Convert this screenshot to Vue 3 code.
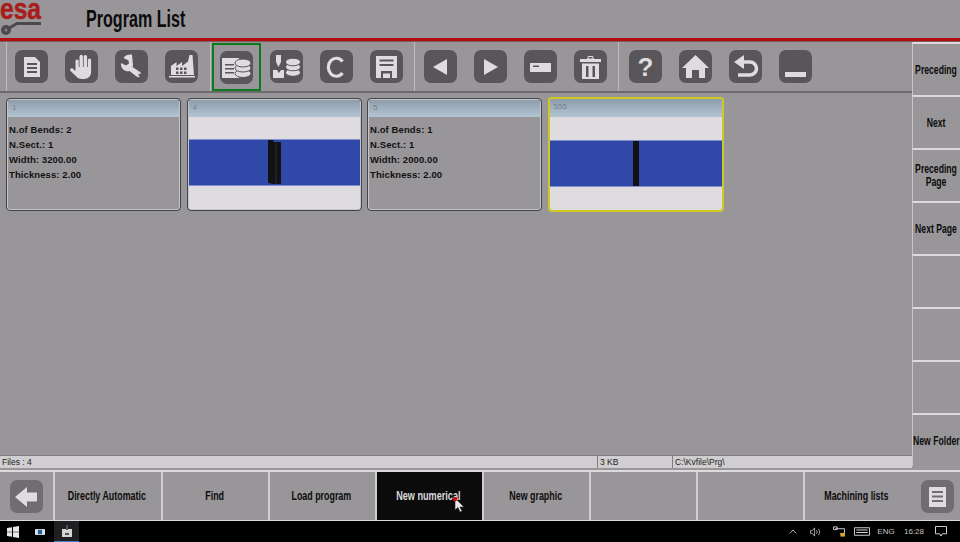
<script setup>
const programs = [
  { id: '1', info: ['N.of Bends: 2', 'N.Sect.: 1', 'Width: 3200.00', 'Thickness: 2.00'] },
  { id: '4', stack: 'wide' },
  { id: '5', info: ['N.of Bends: 1', 'N.Sect.: 1', 'Width: 2000.00', 'Thickness: 2.00'] },
  { id: '555', stack: 'thin', selected: true }
]
const sideButtons = ['Preceding', 'Next', 'Preceding\nPage', 'Next Page', '', '', '', 'New Folder']
const bottomButtons = ['Directly Automatic', 'Find', 'Load program', 'New numerical', 'New graphic', '', '', 'Machining lists']
</script>

<template>
  <div class="screen">
    <header class="top">
      <div class="logo">
        <span class="logo-text">esa</span>
        <svg class="logo-key" viewBox="0 0 42 14" width="42" height="14">
          <path d="M6 8 L17 1.500 H41" fill="none" stroke="#4b494b" stroke-width="3" />
          <circle cx="6" cy="8" r="5" fill="#4b494b" />
          <circle cx="6" cy="8" r="1.500" fill="#807e80" />
        </svg>
      </div>
      <h1><span>Program List</span></h1>
    </header>
    <div class="red-line"></div>

    <div class="middle">
      <div class="left">
        <nav class="toolbar">
          <div class="group g1">
            <button class="tool">
              <svg viewBox="0 0 33 33"><path class="i" d="M9 7h11l5 5v15H9z" /><path class="d" d="M12 13h10v2H12zM12 17h10v2H12zM12 21h10v2H12z" /></svg>
            </button>
            <button class="tool">
              <svg viewBox="0 0 33 33"><path class="i" d="M10.500 11a1.600 1.600 0 0 1 3.200 0v6h.8V6.500a1.700 1.700 0 0 1 3.400 0V17h.8V6.800a1.700 1.700 0 0 1 3.400 0V17h.8v-7a1.600 1.600 0 0 1 3.200 0v12c0 4-3 7-7 7h-2.500c-2.500 0-4-1-5.500-2.700L5.500 21c-1.300-1.600.7-3.500 2.300-2.200l2.700 2.200z" /></svg>
            </button>
            <button class="tool">
              <svg viewBox="0 0 33 33"><path class="i" d="M17 4.500c-3-.5-7 .5-8.500 3.500l5 2.500.5 3-3 2-5-2.500c-.5 3.500 1.500 7 5 8 1.500.4 2.500.3 3.500 0l7 5.500c1.500 1 3 1 4-.5s.8-3-.5-4l-7.500-5c.5-1.500.8-3 .2-4.500z" /><circle class="d" cx="25" cy="25" r="1.500" /></svg>
            </button>
            <button class="tool">
              <svg viewBox="0 0 33 33"><path class="i" d="M6 25V16l5.500-4v4l5.500-4v4l6-4.500L24.500 5h3L29 25zM4 26h26v1.500H4z" /><path class="d" d="M11 17.500h2.500V20H11zM15 17.500h2.500V20H15zM19 17.500h2.500V20H19zM11 21.500h2.500V24H11zM15 21.500h2.500V24H15zM19 21.500h2.500V24H19z" /></svg>
            </button>
          </div>
          <div class="group g2">
            <span class="active">
              <button class="tool">
                <svg viewBox="0 0 33 33">
                  <path class="i" d="M2 7h17v20H2z" /><path class="d" d="M5 13h9v1.500H5zM5 17h9v1.500H5zM5 21h9v1.500H5z" />
                  <g class="db"><ellipse cx="23" cy="22.500" rx="8" ry="4" /><ellipse cx="23" cy="17" rx="8" ry="4" /><ellipse cx="23" cy="12" rx="8" ry="4" /></g>
                </svg>
              </button>
            </span>
            <button class="tool">
              <svg viewBox="0 0 33 33">
                <path class="i" d="M6 5h5v7l-2.500 5L6 12zM3 20h4l2 3 2-3h3v8H3z" />
                <g class="db"><ellipse cx="23" cy="22.500" rx="7.500" ry="3.800" /><ellipse cx="23" cy="17" rx="7.500" ry="3.800" /><ellipse cx="23" cy="12" rx="7.500" ry="3.800" /></g>
              </svg>
            </button>
            <button class="tool">
              <svg viewBox="0 0 33 33"><path d="M22.500 11.500A8 9 0 1 0 22.500 23" fill="none" stroke="#dedcde" stroke-width="3.200" /></svg>
            </button>
            <button class="tool">
              <svg viewBox="0 0 33 33"><path class="i" d="M6 6h21v22H6z" /><path class="d" d="M9.500 9.500h14v2h-14zM9.500 14h14v2h-14zM11 21h11v7H11z" /><path class="i" d="M13 23.500h7V28h-7z" /></svg>
            </button>
          </div>
          <div class="group g3">
            <button class="tool"><svg viewBox="0 0 33 33"><path class="i" d="M9 17 23 9v16z" /></svg></button>
            <button class="tool"><svg viewBox="0 0 33 33"><path class="i" d="M10 9l14 8-14 8z" /></svg></button>
            <button class="tool">
              <svg viewBox="0 0 33 33"><path class="i" d="M6 13h21v9H6z" /><path class="d" d="M9 15.500h6v1.500H9z" /></svg>
            </button>
            <button class="tool">
              <svg viewBox="0 0 33 33"><path class="i" d="M6 9h7l1-3h5l1 3h7v3H6zM8 13.500h17V29H8z" /><path class="d" d="M12 16h2.500v11H12zM18.500 16H21v11h-2.500z" /><path class="d" d="M14.500 7h4v1.500h-4z" /></svg>
            </button>
          </div>
          <div class="group g4">
            <button class="tool"><svg viewBox="0 0 33 33"><text x="16.500" y="26" text-anchor="middle" class="q">?</text></svg></button>
            <button class="tool"><svg viewBox="0 0 33 33"><path class="i" d="M16.500 5 30 18h-4v10h-6v-8h-7v8H7V18H3z" /></svg></button>
            <button class="tool">
              <svg viewBox="0 0 33 33"><path class="i" d="M5 12l10-7v14z" /><path d="M13 12h8a6.500 6.500 0 0 1 0 13H9" fill="none" stroke="#dedcde" stroke-width="3.500" /></svg>
            </button>
            <button class="tool"><svg viewBox="0 0 33 33"><path class="i" d="M6 22h21v5H6z" /></svg></button>
          </div>
        </nav>

        <section class="cards">
          <article v-for="p in programs" :key="p.id" class="card" :class="{ selected: p.selected }">
            <div class="card-title">{{ p.id }}</div>
            <div v-if="p.info" class="card-info">
              <div v-for="line in p.info" :key="line">{{ line }}</div>
            </div>
            <div v-else class="card-preview">
              <div class="band">
                <svg v-if="p.stack === 'wide'" viewBox="0 0 13 45" width="13" height="45">
                  <path d="M0 0h5l1 2h7v42H6l-6-1z" fill="#121214" />
                  <path d="M7.500 3h1v41h-1z" fill="#2c2e38" />
                </svg>
                <span v-else class="thin-stack"></span>
              </div>
            </div>
          </article>
        </section>

        <div class="status">
          <span class="s-files">Files : 4</span>
          <span class="s-size">3 KB</span>
          <span class="s-path">C:\Kvfile\Prg\</span>
        </div>
      </div>

      <aside class="side">
        <button v-for="(label, i) in sideButtons" :key="i" class="side-btn"><span>{{ label }}</span></button>
      </aside>
    </div>

    <div class="bottom">
      <div class="bottom-icon first">
        <span class="box">
          <svg viewBox="0 0 33 33" width="33" height="33"><path class="i" d="M5 17 17 7v5.500h10v9H17V27z" /></svg>
        </span>
      </div>
      <button
        v-for="(label, i) in bottomButtons"
        :key="i"
        class="bottom-btn"
        :class="{ pressed: label === 'New numerical' }"
      >
        <span>{{ label }}</span>
        <svg v-if="label === 'New numerical'" class="cursor" viewBox="0 0 12 16" width="12" height="16">
          <path d="M2 1v12l3-2.500L7 15l2-1-2-4h4z" fill="#e8e8e8" stroke="#222" stroke-width=".6" />
          <circle cx="2" cy="2" r="2.300" fill="#c4101a" />
        </svg>
      </button>
      <div class="bottom-icon last">
        <span class="box">
          <svg viewBox="0 0 33 33" width="33" height="33"><path class="i" d="M8 7h17v20H8z" /><path class="box-line" d="M11 11h11v2H11zM11 15.500h11v2H11zM11 20h11v2H11z" /></svg>
        </span>
      </div>
    </div>

    <footer class="taskbar">
      <div class="tb-left">
        <svg class="win" viewBox="0 0 12 12" width="12" height="12"><path d="M0 2l5-.8V5.700H0zM6 1 12 0v5.700H6zM0 6.300h5v4.500L0 10zM6 6.300h6V12l-6-1z" fill="#e8e8e8" /></svg>
        <svg class="tv" viewBox="0 0 12 9" width="10" height="8"><path d="M0 1h12v7H0z" fill="#d8e2ee" /><path d="M3.500 2h5v5h-5z" fill="#2a5f96" /></svg>
        <span class="app">
          <svg viewBox="0 0 12 12" width="12" height="12"><path d="M1 4h10v8H1z" fill="#d4d4d4" /><path d="M5 0h2v5H5zM4 8h4v2H4z" fill="#555" /></svg>
        </span>
      </div>
      <div class="tray">
        <svg class="t-caret" viewBox="0 0 10 6" width="8" height="5"><path d="M1 5.500l4-4.500 4 4.500" fill="none" stroke="#d8d8d8" /></svg>
        <svg class="t-sound" viewBox="0 0 12 10" width="11" height="10"><path d="M.5 3.500h2l2.500-3v9l-2.500-3h-2zM7 3c1 1 1 3 0 4M9 1.500c2 2 2 5 0 7" fill="none" stroke="#d8d8d8" stroke-width=".8" /></svg>
        <svg class="t-net" viewBox="0 0 13 11" width="12" height="11"><path d="M2.500 2.500h10v6H8M.5.500h4v3h-4z" fill="none" stroke="#d8d8d8" /><path d="M8 7h5v4H8z" fill="#d4a72c" /></svg>
        <svg class="t-kb" viewBox="0 0 17 9" width="16" height="9"><path d="M.5.500h16v8H.5z" fill="none" stroke="#d8d8d8" /><path d="M2.500 2.500h12v1h-12zM2.500 5h12v1h-12z" fill="#d8d8d8" /></svg>
        <span class="eng">ENG</span>
        <span class="clock">16:28</span>
        <svg class="t-note" viewBox="0 0 13 12" width="12" height="11"><path d="M.5.500h12v8H8l-1.500 2.500L5 8.500H.5z" fill="none" stroke="#e4e4e4" /></svg>
      </div>
    </footer>
  </div>
</template>

<style>
html, body { margin: 0; background: #989698; }
</style>

<style scoped>
.screen {
  width: 960px;
  height: 542px;
  overflow: hidden;
  display: flex;
  flex-direction: column;
  background: #989698;
  font-family: "Liberation Sans", Arial, sans-serif;
  color: #111;
}
.top { height: 38px; display: flex; align-items: center; flex-shrink: 0; }
.logo { width: 86px; height: 38px; display: flex; flex-direction: column; }
.logo-text {
  font-size: 30px;
  font-weight: bold;
  line-height: 18px;
  height: 22px;
  color: #a81c1c;
  -webkit-text-stroke: .5px #a81c1c;
  transform: scaleX(.82);
  transform-origin: left center;
}
.logo-key { display: block; }
.top h1 {
  margin: 0;
  font-size: 23px;
  font-weight: bold;
  color: #0c0c0c;
}
.top h1 span { display: inline-block; transform: scaleX(.7); transform-origin: left center; white-space: nowrap; }
.red-line { height: 3px; background: #b20d10; border-bottom: 1px solid #7c5a5c; flex-shrink: 0; }

.middle { display: flex; height: 428px; flex-shrink: 0; }
.left { width: 912px; display: flex; flex-direction: column; }

.toolbar {
  height: 49px;
  display: flex;
  border-bottom: 2px solid #6c6a6c;
  flex-shrink: 0;
}
.group { display: flex; align-items: center; gap: 17px; border-right: 1px solid #bdbbbd; box-sizing: border-box; }
.g1 { width: 205px; margin-left: 6px; padding-left: 8px; border-left: 1px solid #bdbbbd; }
.g2 { width: 204px; padding-left: 9px; }
.g3 { width: 204px; padding-left: 9px; }
.g4 { padding-left: 10px; border-right: 0; }
.tool {
  width: 33px;
  height: 33px;
  padding: 0;
  border: 0;
  border-radius: 7px;
  background: #585658;
  flex-shrink: 0;
}
.tool svg { display: block; width: 33px; height: 33px; }
.active {
  margin: 1px -8px 0;
  align-self: stretch;
  padding: 0 6px;
  display: flex;
  align-items: center;
  border: 2px solid #0e7a20;
}
.i { fill: #dedcde; }
.d { fill: #585658; }
.db ellipse { fill: #dedcde; stroke: #585658; stroke-width: 1; }
.q { font: bold 26px "Liberation Sans", sans-serif; fill: #dedcde; }

.cards { flex: 1; display: flex; gap: 5.500px; padding: 5px 0 0 6px; align-items: flex-start; }
.card {
  width: 175px;
  height: 113px;
  box-sizing: border-box;
  border: 1px solid #3e4650;
  border-radius: 4px;
  box-shadow: inset 0 0 0 1px #c6c4c6;
  padding: 1px;
  overflow: hidden;
  display: flex;
  flex-direction: column;
}
.card.selected { border: 2px solid #cfc820; box-shadow: none; padding: 0; width: 176px; height: 115px; margin-top: -1px; }
.card-title {
  height: 17px;
  line-height: 15px;
  padding-left: 4px;
  font-size: 8px;
  color: #74828e;
  background: linear-gradient(#8f9dab, #b2c4d2);
  flex-shrink: 0;
  box-sizing: border-box;
}
.selected .card-title { height: 18px; }
.card-info { padding: 5px 1px; font-size: 9.500px; font-weight: bold; line-height: 15px; color: #111; letter-spacing: .1px; }
.card-preview { flex: 1; display: flex; flex-direction: column; justify-content: center; padding-bottom: 1px; background: #dedcde; }
.band {
  height: 47px;
  background: #3048a8;
  border-top: 1px solid #7f8fd0;
  border-bottom: 1px solid #7f8fd0;
  box-sizing: border-box;
  display: flex;
  justify-content: center;
  align-items: center;
}
.thin-stack { width: 6px; height: 45px; background: #101218; }

.status {
  height: 12px;
  margin-bottom: 2px;
  border-top: 1px solid #807e80;
  display: flex;
  background: #d0ced0;
  font-size: 8.500px;
  line-height: 12px;
  color: #222;
  flex-shrink: 0;
}
.status span { box-sizing: border-box; padding-left: 2px; white-space: nowrap; }
.s-files { width: 597px; }
.s-size { width: 75px; border-left: 1px solid #807e80; }
.s-path { flex: 1; border-left: 1px solid #807e80; }

.side { width: 48px; display: flex; flex-direction: column; }
.side-btn {
  height: 53px;
  padding: 1px 0 0;
  background: #989698;
  border: 0;
  border-top: 2px solid #dcdadc;
  border-left: 1px solid #c8c6c8;
  font-family: inherit;
  font-size: 12px;
  font-weight: bold;
  line-height: 13px;
  color: #0c0c0c;
  display: flex;
  align-items: center;
  justify-content: center;
}
.side-btn span {
  flex-shrink: 0;
  white-space: pre;
  text-align: center;
  transform: scaleX(.72);
}

.bottom {
  display: grid;
  grid-template-columns: 53px 108px repeat(7, 107px) 1fr;
  border-top: 2px solid #dcdadc;
  border-bottom: 1px solid #dcdadc;
  height: 48px;
  flex-shrink: 0;
}
.bottom-icon { display: flex; align-items: center; justify-content: center; }
.bottom-icon.first { padding-right: 1px; }
.bottom-icon.last { padding-left: 4px; }
.box {
  width: 33px;
  height: 33px;
  border-radius: 7px;
  background: #6f6d6f;
  display: block;
}
.box svg { display: block; }
.box-line { fill: #6f6d6f; }
.bottom-btn {
  position: relative;
  border: 0;
  border-left: 2px solid #d0ced0;
  background: #989698;
  padding: 0 2px 0 0;
  font-family: inherit;
  font-size: 12px;
  font-weight: bold;
  color: #0c0c0c;
  display: flex;
  align-items: center;
  justify-content: center;
}
.bottom-btn span { flex-shrink: 0; white-space: nowrap; transform: scaleX(.74); }
.bottom-btn.pressed { background: #0b0b0b; color: #dcdcdc; }
.bottom-btn.pressed span { transform: scaleX(.76); }
.cursor { position: absolute; left: 76px; top: 25px; }

.taskbar {
  background: #000;
  display: flex;
  justify-content: space-between;
  align-items: center;
  flex: 1;
}
.tb-left { display: flex; align-items: center; height: 100%; padding-left: 7px; }
.win { margin-right: 16px; }
.tv { margin-right: 9px; }
.app {
  width: 25px;
  height: 100%;
  box-sizing: border-box;
  background: #1e2022;
  border-bottom: 1px solid #3f7fc4;
  display: flex;
  align-items: center;
  justify-content: center;
}
.tray { display: flex; align-items: center; padding-right: 13px; color: #c8c8c8; font-size: 8px; }
.t-sound { margin-left: 13px; }
.t-net { margin-left: 12px; }
.t-kb { margin-left: 9px; }
.eng { width: 18px; margin-left: 7px; text-align: center; white-space: nowrap; }
.clock { width: 20px; margin-left: 9px; text-align: center; white-space: nowrap; }
.t-note { margin-left: 11px; }
</style>
